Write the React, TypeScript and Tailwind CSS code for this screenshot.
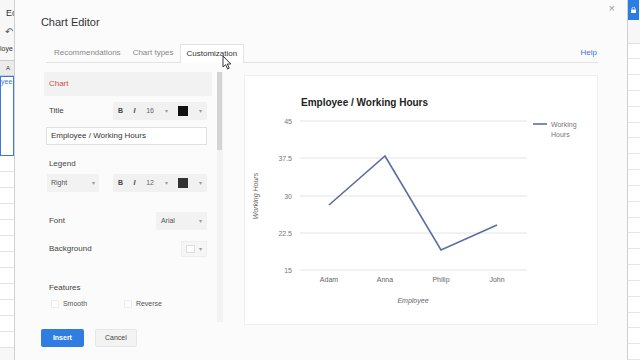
import React from 'react';

const font = { fontFamily: '"Liberation Sans", Arial, sans-serif' };

const Caret = () => <span className="text-[6px] text-[#999]">▾</span>;

const FormatBar = ({ size, swatch }: { size: string; swatch: string }) => (
  <div className="flex h-[18px] w-[94px] items-center justify-between rounded-[2px] bg-[#f1f1f1] px-[5px] text-[7px] text-[#444]">
    <span className="font-bold">B</span>
    <span className="font-bold italic">I</span>
    <span className="text-[#666]">{size}</span>
    <Caret />
    <span className={`h-[10px] w-[10px] ${swatch}`} />
    <Caret />
  </div>
);

const ChartPreview = () => {
  const ys = [
    { v: '45', y: 45 },
    { v: '37.5', y: 82 },
    { v: '30', y: 120 },
    { v: '22.5', y: 157 },
    { v: '15', y: 194 },
  ];
  const pts = [
    { name: 'Adam', x: 84, y: 129 },
    { name: 'Anna', x: 140, y: 80 },
    { name: 'Philip', x: 196, y: 174 },
    { name: 'John', x: 252, y: 149 },
  ];
  return (
    <svg width="352" height="250" viewBox="0 0 352 250" style={font}>
      <text x="56" y="30" fontSize="10" fontWeight="bold" fill="#222">
        Employee / Working Hours
      </text>
      {ys.map((t) => (
        <g key={t.v}>
          <line x1="55" x2="282" y1={t.y} y2={t.y} stroke="#e4e4e4" strokeWidth="1" />
          <text x="47" y={t.y + 2.5} fontSize="7" fill="#777" textAnchor="end">
            {t.v}
          </text>
        </g>
      ))}
      {pts.map((p) => (
        <text key={p.name} x={p.x} y="206" fontSize="7" fill="#666" textAnchor="middle">
          {p.name}
        </text>
      ))}
      <text x="168" y="227" fontSize="7" fill="#666" fontStyle="italic" textAnchor="middle">
        Employee
      </text>
      <text
        x="0"
        y="0"
        fontSize="7"
        fill="#666"
        fontStyle="italic"
        textAnchor="middle"
        transform="translate(13 120) rotate(-90)"
      >
        Working Hours
      </text>
      <polyline
        points={pts.map((p) => `${p.x},${p.y}`).join(' ')}
        fill="none"
        stroke="#5a6f9e"
        strokeWidth="1.6"
      />
      <line x1="288" x2="302" y1="48" y2="48" stroke="#5a6f9e" strokeWidth="1.6" />
      <text x="306" y="51" fontSize="7" fill="#777">
        Working
      </text>
      <text x="306" y="61" fontSize="7" fill="#777">
        Hours
      </text>
    </svg>
  );
};

const LeftStrip = () => (
  <div className="relative flex w-[16px] flex-col overflow-hidden border-r border-[#d0d0d0] bg-[#f7f7f7] text-[8px] text-[#333]">
    <div className="h-[24px] pl-[6px] pt-[7px] text-[9px]">Ec</div>
    <div className="h-[20px] pl-[5px] text-[10px] text-[#555]">↶</div>
    <div className="h-[16px] text-[7px]">loye</div>
    <div className="flex h-[16px] items-center border-y border-[#ccc] bg-[#ebebeb] pl-[6px] text-[6px]">A</div>
    <div className="h-[80px] border border-[#3b78e7] bg-white text-[7px] text-[#3b78e7]">yee</div>
    {Array.from({ length: 12 }).map((_, i) => (
      <div key={i} className="h-[16px] border-b border-[#e3e3e3] bg-white" />
    ))}
  </div>
);

const RightStrip = () => (
  <div className="flex w-[14px] flex-col overflow-hidden border-l border-[#d0d0d0] bg-[#f7f7f7]">
    <div className="flex h-[20px] w-[11px] items-center justify-center bg-[#2a7de1]">
      <svg width="5" height="6" viewBox="0 0 5 6">
        <rect x="0" y="2.5" width="5" height="3.5" fill="#fff" />
        <path d="M1 2.5V1.6a1.5 1.5 0 0 1 3 0v0.9" stroke="#fff" fill="none" strokeWidth="0.8" />
      </svg>
    </div>
    <div className="h-[24px] border-b border-[#e0e0e0]" />
    {Array.from({ length: 20 }).map((_, i) => (
      <div key={i} className="h-[16px] border-b border-[#e6e6e6] bg-white" />
    ))}
  </div>
);

export default function App() {
  return (
    <div className="relative flex h-[360px] w-[640px] overflow-hidden bg-white" style={font}>
      <LeftStrip />
      <div className="flex flex-1 flex-col bg-[#fbfbfb] pl-[26px] pr-[29px] pt-[15px] shadow-[0_0_6px_rgba(0,0,0,0.12)]">
        <div className="flex h-[14px] items-start justify-between">
          <span className="text-[11px] leading-[14px] text-[#333]">Chart Editor</span>
          <span className="-mr-[17px] -mt-[13px] text-[11px] leading-[12px] text-[#999]">×</span>
        </div>

        <div className="mt-[15px] ml-[5px] flex h-[19px] items-end border-b border-[#e3e3e3] text-[8px]">
          <div className="flex h-[18px] items-center pl-[8px] pr-[6px] text-[#888]">Recommendations</div>
          <div className="flex h-[18px] items-center px-[6px] text-[#888]">Chart types</div>
          <div className="-mb-px flex h-[19px] items-center border border-b-0 border-[#e3e3e3] bg-white px-[6px] text-[#333]">
            Customization
          </div>
          <div className="flex-1" />
          <div className="flex h-[18px] items-center pr-[1px] text-[#3b78c8]">Help</div>
        </div>

        <div className="mt-[9px] ml-[3px] flex h-[250px]">
          <div className="flex w-[168px] flex-col text-[8px] text-[#444]">
            <div className="flex h-[24px] items-center bg-[#f2f2f2] pl-[5px] text-[#c9514a]">Chart</div>
            <div className="mt-[6px] flex h-[18px] items-center justify-between pl-[5px] pr-[5px]">
              <span>Title</span>
              <FormatBar size="16" swatch="bg-[#111]" />
            </div>
            <div className="ml-[2px] mr-[5px] mt-[7px] flex h-[18px] items-center border border-[#e0e0e0] bg-white pl-[4px] text-[#333]">
              Employee / Working Hours
            </div>
            <div className="mt-[13px] flex h-[12px] items-center pl-[5px]">Legend</div>
            <div className="mt-[4px] flex h-[18px] items-center justify-between pl-[3px] pr-[5px]">
              <div className="flex h-[18px] w-[52px] items-center justify-between bg-[#f2f2f2] px-[4px] text-[7px] text-[#555]">
                <span>Right</span>
                <Caret />
              </div>
              <FormatBar size="12" swatch="bg-[#333]" />
            </div>
            <div className="mt-[20px] flex h-[18px] items-center justify-between pl-[5px] pr-[5px]">
              <span>Font</span>
              <div className="flex h-[18px] w-[51px] items-center justify-between bg-[#f2f2f2] px-[5px] text-[7px] text-[#555]">
                <span>Arial</span>
                <Caret />
              </div>
            </div>
            <div className="mt-[11px] flex h-[16px] items-center justify-between pl-[5px] pr-[5px]">
              <span>Background</span>
              <div className="flex h-[16px] w-[26px] items-center justify-between border border-[#eee] bg-[#f6f6f6] px-[4px]">
                <span className="h-[8px] w-[9px] border border-[#ddd] bg-white" />
                <Caret />
              </div>
            </div>
            <div className="mt-[25px] flex h-[12px] items-center pl-[5px]">Features</div>
            <div className="mt-[4px] flex h-[12px] items-center pl-[7px] text-[7px] text-[#555]">
              <span className="h-[8px] w-[8px] border border-[#eee] bg-white" />
              <span className="ml-[4px] w-[61px]">Smooth</span>
              <span className="h-[8px] w-[8px] border border-[#eee] bg-white" />
              <span className="ml-[4px]">Reverse</span>
            </div>
          </div>

          <div className="ml-[5px] flex h-[250px] w-[6px] flex-col bg-[#f3f3f3]">
            <div className="h-[78px] w-[5px] bg-[#d4d4d4]" />
          </div>

          <div className="ml-[21px] mt-[3px] h-[250px] flex-1 border border-[#efefef] bg-white">
            <ChartPreview />
          </div>
        </div>

        <div className="mt-[7px] flex h-[18px] items-center gap-[11px]">
          <div className="flex h-[18px] w-[43px] items-center justify-center rounded-[2px] bg-[#2f7de0] text-[7px] font-bold text-white">
            Insert
          </div>
          <div className="flex h-[18px] w-[42px] items-center justify-center rounded-[2px] border border-[#e6e6e6] bg-[#f3f3f3] text-[7px] text-[#444]">
            Cancel
          </div>
        </div>
      </div>
      <RightStrip />

      <svg className="absolute left-[222px] top-[55px]" width="10" height="15" viewBox="0 0 10 15">
        <path d="M1 1 L1 12 L3.6 9.6 L5.6 14 L7.2 13.2 L5.3 9 L8.8 9 Z" fill="#fff" stroke="#222" strokeWidth="0.9" />
      </svg>
    </div>
  );
}
